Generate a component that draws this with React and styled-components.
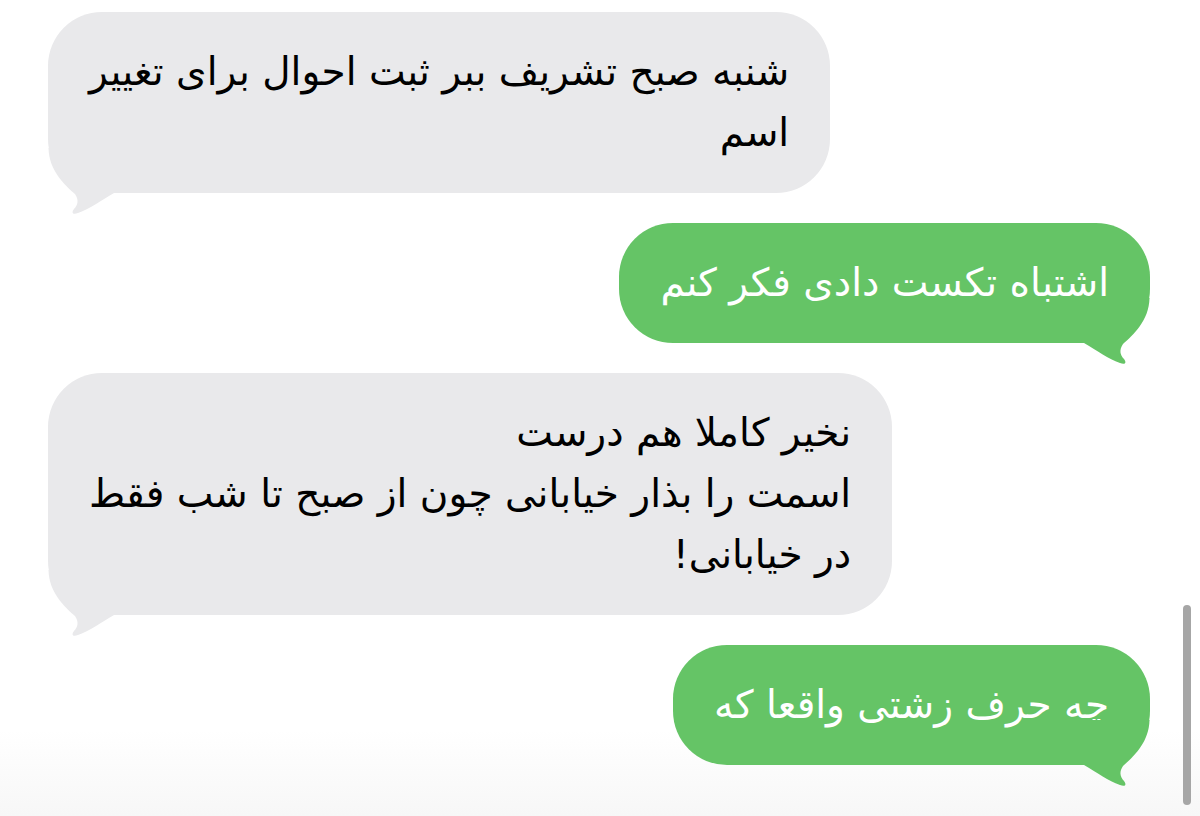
import React from "react";
import styled, { createGlobalStyle } from "styled-components";

const GlobalStyle = createGlobalStyle`
  html, body {
    margin: 0;
    padding: 0;
    background: #ffffff;
  }
  #root {
    min-height: 816px;
  }
`;

const Screen = styled.div`
  position: relative;
  height: 816px;
  overflow: hidden;
  background: linear-gradient(180deg, #ffffff 0, #ffffff 730px, #f7f7f7 816px);
  font-family: "DejaVu Sans", "Noto Sans", sans-serif;
`;

const Thread = styled.div`
  display: flex;
  flex-direction: column;
  gap: 30px;
  padding: 12px 50px 0 48px;
`;

const Row = styled.div`
  display: flex;
  justify-content: ${(p) => (p.$out ? "flex-end" : "flex-start")};
`;

const Bubble = styled.div`
  position: relative;
  direction: rtl;
  text-align: right;
  white-space: nowrap;
  padding: 29px 41px 30px 41px;
  border-radius: 54px;
  font-size: 39px;
  line-height: 61px;
  color: ${(p) => (p.$out ? "#ffffff" : "#000000")};
  background: ${(p) => (p.$out ? "#65c466" : "#e9e9eb")};
`;

const Tail = styled.svg`
  position: absolute;
  bottom: -22px;
  ${(p) => (p.$out ? "right: 0; transform: scaleX(-1);" : "left: 0;")}
  width: 70px;
  height: 72px;
  overflow: visible;
`;

const ScrollThumb = styled.div`
  position: absolute;
  right: 9px;
  top: 605px;
  width: 8px;
  height: 200px;
  border-radius: 4px;
  background: #a6a6a6;
`;

const BubbleTail = ({ out }) => (
  <Tail $out={out} viewBox="0 -50 70 72">
    <path
      d="M0.5 -45 C1 -22 17 -8 27 1 C31 7 30 12 26 16 C23 20 25 22 30 20 C42 16 52 8 66 0 L66 -45 Z"
      fill={out ? "#65c466" : "#e9e9eb"}
    />
  </Tail>
);

const Message = ({ out, lines }) => (
  <Row $out={out}>
    <Bubble $out={out}>
      {lines.map((l, i) => (
        <React.Fragment key={i}>
          {i > 0 && <br />}
          {l}
        </React.Fragment>
      ))}
      <BubbleTail out={out} />
    </Bubble>
  </Row>
);

const messages = [
  { out: false, lines: ["شنبه صبح تشریف ببر ثبت احوال برای تغییر", "اسم"] },
  { out: true, lines: ["اشتباه تکست دادی فکر کنم"] },
  {
    out: false,
    lines: [
      "نخیر کاملا هم درست",
      "اسمت را بذار خیابانی چون از صبح تا شب فقط",
      "در خیابانی!",
    ],
  },
  { out: true, lines: ["چه حرف زشتی واقعا که"] },
];

export default function App() {
  return (
    <Screen>
      <GlobalStyle />
      <Thread>
        {messages.map((m, i) => (
          <Message key={i} out={m.out} lines={m.lines} />
        ))}
      </Thread>
      <ScrollThumb />
    </Screen>
  );
}
